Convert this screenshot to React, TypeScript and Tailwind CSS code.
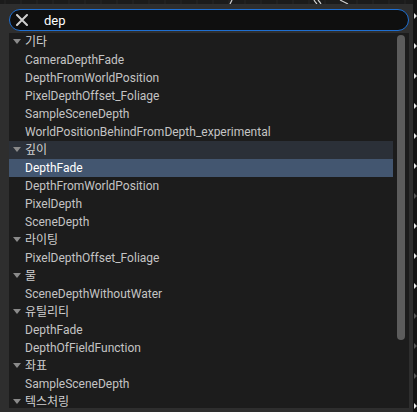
import React from "react";

type Row = { label: string; header?: boolean; state?: "selected" | "parent" };

const rows: Row[] = [
  { label: "기타", header: true },
  { label: "CameraDepthFade" },
  { label: "DepthFromWorldPosition" },
  { label: "PixelDepthOffset_Foliage" },
  { label: "SampleSceneDepth" },
  { label: "WorldPositionBehindFromDepth_experimental" },
  { label: "깊이", header: true, state: "parent" },
  { label: "DepthFade", state: "selected" },
  { label: "DepthFromWorldPosition" },
  { label: "PixelDepth" },
  { label: "SceneDepth" },
  { label: "라이팅", header: true },
  { label: "PixelDepthOffset_Foliage" },
  { label: "물", header: true },
  { label: "SceneDepthWithoutWater" },
  { label: "유틸리티", header: true },
  { label: "DepthFade" },
  { label: "DepthOfFieldFunction" },
  { label: "좌표", header: true },
  { label: "SampleSceneDepth" },
  { label: "텍스처링", header: true },
];

const pins = [16, 46, 76, 106, 136, 166, 196, 226, 256, 286, 316, 346, 376, 406];
const dimPins = new Set([196, 316, 346, 376]);

export default function App() {
  return (
    <div
      className="relative w-[417px] h-[412px] overflow-hidden bg-[#1b1b1b]"
      style={{ fontFamily: "Roboto, 'Noto Sans CJK KR', sans-serif" }}
    >
      {/* graph canvas background */}
      <svg className="absolute inset-0" width="417" height="412">
        {Array.from({ length: 27 }).map((_, i) => (
          <line key={i} x1={i * 16 + 5} y1={0} x2={i * 16 + 5} y2={412} stroke="#262626" strokeWidth="1" />
        ))}
        <path d="M232 0 Q231 2 230 4" stroke="#d0d0d0" strokeWidth="1.2" fill="none" />
        <path d="M314 0 Q315 2 317 4" stroke="#d0d0d0" strokeWidth="1.2" fill="none" />
        <path d="M318 0 Q320 2 321 4" stroke="#d0d0d0" strokeWidth="1.2" fill="none" />
        <path d="M340 0 Q344 2 348 4" stroke="#d0d0d0" strokeWidth="1.2" fill="none" />
        <rect x="413" y="0" width="4" height="412" fill="#141414" />
        {pins.map((y) => (
          <path key={y} d={`M414 ${y - 3} L417 ${y} L414 ${y + 3} Z`} fill={dimPins.has(y) ? "#555" : "#e8e8e8"} />
        ))}
      </svg>

      {/* popup menu */}
      <div className="absolute left-0 top-[4px] w-[413px] h-[408px] bg-[#2e2e2e] flex flex-col pl-[9px] pr-[4px] pt-[5px] pb-[4px] gap-[2px]">
        <div className="h-[22px] w-[400px] shrink-0 rounded-full border border-[#1f6fd1] bg-[#0f0f0f] flex items-center pl-[5px]">
          <svg width="12" height="12" viewBox="0 0 12 12" className="ml-[1px]">
            <path d="M1 1 L11 11 M11 1 L1 11" stroke="#cfcfcf" strokeWidth="2" strokeLinecap="round" />
          </svg>
          <span className="ml-[16px] text-[13px] text-white leading-none">dep</span>
        </div>

        <div className="relative flex-1 bg-[#1c1c1c] overflow-hidden">
          <div className="flex flex-col w-[384px]">
            {rows.map((r, i) => (
              <div
                key={i}
                className={
                  "h-[18px] flex items-center text-[12px] leading-none whitespace-nowrap " +
                  (r.state === "selected"
                    ? "bg-[#435670] text-white"
                    : r.state === "parent"
                    ? "bg-[#2b3038] text-[#d0d0d0]"
                    : "text-[#c4c4c4]")
                }
              >
                {r.header ? (
                  <>
                    <svg width="8" height="6" viewBox="0 0 8 6" className="ml-[4px] mr-[4px]">
                      <path d="M0 0 L8 0 L4 5 Z" fill="#8a8a8a" />
                    </svg>
                    <span className="text-[#d0d0d0]">{r.label}</span>
                  </>
                ) : (
                  <span className="pl-[16px]">{r.label}</span>
                )}
              </div>
            ))}
          </div>
          <div className="absolute right-[4px] top-[2px] w-[8px] h-[305px] rounded-full bg-[#5c5c5c]" />
        </div>
      </div>
    </div>
  );
}
